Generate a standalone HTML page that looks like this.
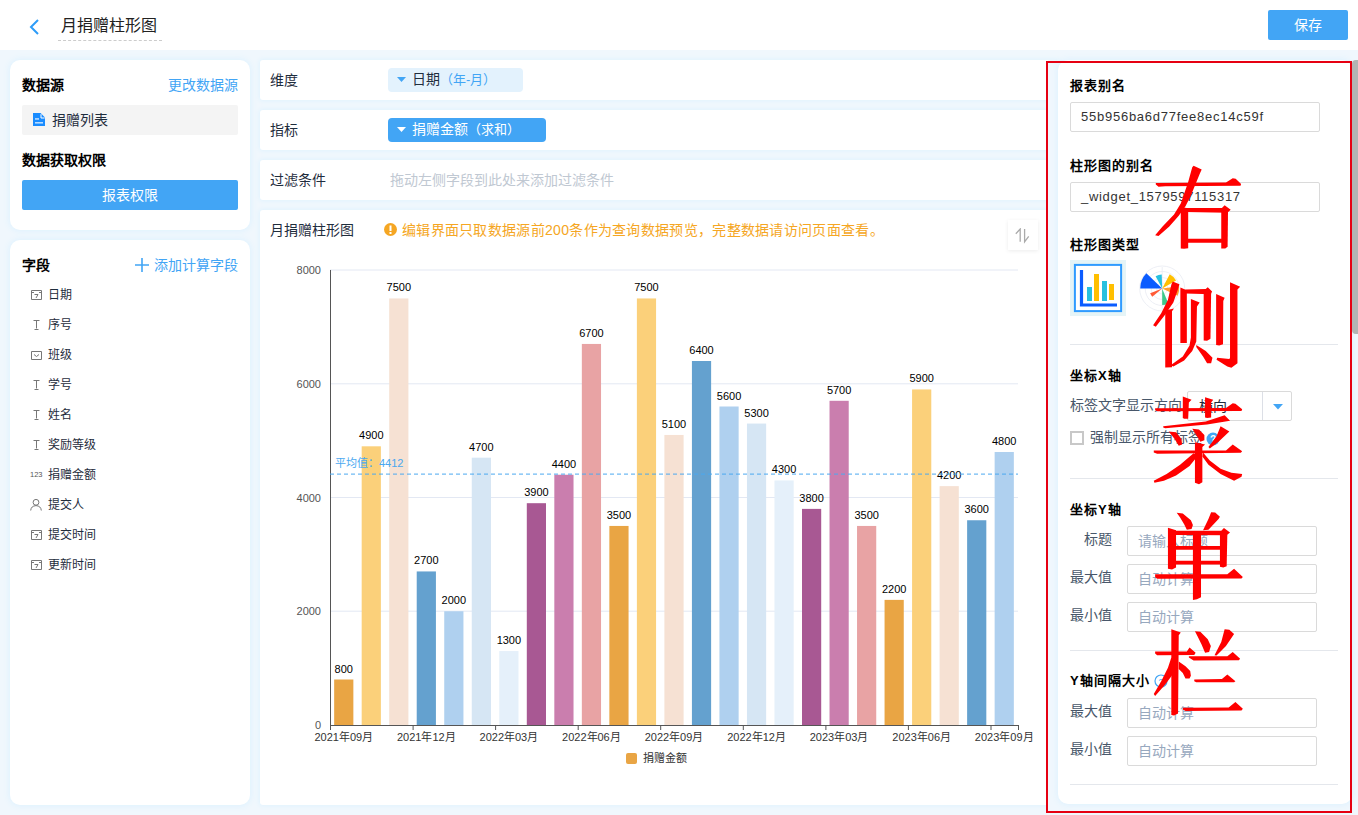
<!DOCTYPE html>
<html lang="zh-CN">
<head>
<meta charset="utf-8">
<style>
*{box-sizing:border-box;margin:0;padding:0}
html,body{width:1358px;height:815px;overflow:hidden}
body{position:relative;background:#f0f7fd;font-family:"Liberation Sans",sans-serif;color:#1f2d3d}
.a{position:absolute;white-space:nowrap}
.hdr{left:0;top:0;width:1358px;height:50px;background:#fff}
.card{position:absolute;background:#fff;border-radius:10px;box-shadow:0 0 6px 1px rgba(222,242,254,1)}
.mcard{position:absolute;background:#fff;border-radius:3px;box-shadow:0 0 4px 1px rgba(224,243,254,1)}
.b{font-weight:bold;color:#000}
.inp{position:absolute;border:1px solid #dadada;border-radius:2px;background:#fff}
.lab{color:#48576a;font-size:14px}
.ph{color:#97a8be;font-size:14px}
.div{position:absolute;height:1px;background:#e4e7ec}
.fi{position:absolute;left:31px;width:11px;height:10px}
.ft{position:absolute;left:48px;font-size:12px;color:#1f2d3d;line-height:14px}
</style>
</head>
<body>
<!-- header -->
<div class="a hdr"></div>
<svg class="a" style="left:28px;top:18px" width="14" height="18" viewBox="0 0 14 18"><path d="M10 2 L3 9 L10 16" fill="none" stroke="#2d9cf8" stroke-width="2"/></svg>
<div class="a" style="left:61px;top:15px;font-size:16px;line-height:22px;color:#222">月捐赠柱形图</div>
<div class="a" style="left:58px;top:40px;width:104px;height:0;border-top:1px dashed #ccc"></div>
<div class="a" style="left:1268px;top:10px;width:80px;height:30px;background:#42a5f5;border-radius:2px;color:#fff;font-size:14px;line-height:30px;text-align:center">保存</div>

<!-- left card 1 -->
<div class="card" style="left:10px;top:60px;width:240px;height:170px"></div>
<div class="a b" style="left:22px;top:76px;font-size:14px;line-height:18px">数据源</div>
<div class="a" style="left:168px;top:76px;font-size:14px;line-height:18px;color:#42a5f5">更改数据源</div>
<div class="a" style="left:22px;top:105px;width:216px;height:30px;background:#f4f4f4;border-radius:2px"></div>
<svg class="a" style="left:33px;top:113px" width="12" height="13" viewBox="0 0 12 13"><path d="M0 0 H7.6 L12 4.4 V13 H0 Z" fill="#1a8cff"/><path d="M8 1.2 V5 H11.6" fill="none" stroke="#fff" stroke-width="1"/><rect x="2" y="5.4" width="4" height="1.1" fill="#fff"/><rect x="2" y="9.3" width="8" height="1.1" fill="#fff"/></svg>
<div class="a" style="left:52px;top:111px;font-size:14px;line-height:18px;color:#1f2d3d">捐赠列表</div>
<div class="a b" style="left:22px;top:151px;font-size:14px;line-height:18px">数据获取权限</div>
<div class="a" style="left:22px;top:180px;width:216px;height:30px;background:#42a5f5;border-radius:2px;color:#fff;font-size:14px;line-height:30px;text-align:center">报表权限</div>

<!-- left card 2 -->
<div class="card" style="left:10px;top:240px;width:240px;height:565px"></div>
<div class="a b" style="left:22px;top:256px;font-size:14px;line-height:18px">字段</div>
<svg class="a" style="left:135px;top:258px" width="14" height="14" viewBox="0 0 14 14"><path d="M7 0 V14 M0 7 H14" stroke="#42a5f5" stroke-width="1.6"/></svg>
<div class="a" style="left:154px;top:256px;font-size:14px;line-height:18px;color:#42a5f5">添加计算字段</div>

<svg class="fi" style="top:290px" width="11" height="10" viewBox="0 0 11 10"><path d="M0.5 0.5 H10.5 V9.5 H0.5 Z M0.5 2.5 H3 M8 2.5 H10.5 M3.5 4.5 H7 L5 8" fill="none" stroke="#777" stroke-width="1"/></svg>
<div class="ft" style="top:288px">日期</div>
<svg class="fi" style="top:320px" width="11" height="10" viewBox="0 0 11 10"><path d="M2.5 0.5 H8.5 M5.5 0.5 V8.5 M3.5 9.5 H7.5" fill="none" stroke="#777" stroke-width="1"/></svg>
<div class="ft" style="top:318px">序号</div>
<svg class="fi" style="top:350px" width="11" height="10" viewBox="0 0 11 10"><path d="M0.5 1.5 H10.5 V9.5 H0.5 Z M3 4.5 L5.5 6.5 L8 4.5" fill="none" stroke="#777" stroke-width="1"/></svg>
<div class="ft" style="top:348px">班级</div>
<svg class="fi" style="top:380px" width="11" height="10" viewBox="0 0 11 10"><path d="M2.5 0.5 H8.5 M5.5 0.5 V8.5 M3.5 9.5 H7.5" fill="none" stroke="#777" stroke-width="1"/></svg>
<div class="ft" style="top:378px">学号</div>
<svg class="fi" style="top:410px" width="11" height="10" viewBox="0 0 11 10"><path d="M2.5 0.5 H8.5 M5.5 0.5 V8.5 M3.5 9.5 H7.5" fill="none" stroke="#777" stroke-width="1"/></svg>
<div class="ft" style="top:408px">姓名</div>
<svg class="fi" style="top:440px" width="11" height="10" viewBox="0 0 11 10"><path d="M2.5 0.5 H8.5 M5.5 0.5 V8.5 M3.5 9.5 H7.5" fill="none" stroke="#777" stroke-width="1"/></svg>
<div class="ft" style="top:438px">奖励等级</div>
<div class="a" style="left:30px;top:470px;font-size:7.5px;line-height:10px;color:#555">123</div>
<div class="ft" style="top:468px">捐赠金额</div>
<svg class="a" style="left:30px;top:499px" width="12" height="12" viewBox="0 0 12 12"><circle cx="6" cy="3.3" r="2.9" fill="none" stroke="#777" stroke-width="1"/><path d="M0.7 11.5 Q1 7 6 6.6 Q11 7 11.3 11.5" fill="none" stroke="#777" stroke-width="1"/></svg>
<div class="ft" style="top:498px">提交人</div>
<svg class="fi" style="top:530px" width="11" height="10" viewBox="0 0 11 10"><path d="M0.5 0.5 H10.5 V9.5 H0.5 Z M0.5 2.5 H3 M8 2.5 H10.5 M3.5 4.5 H7 L5 8" fill="none" stroke="#777" stroke-width="1"/></svg>
<div class="ft" style="top:528px">提交时间</div>
<svg class="fi" style="top:560px" width="11" height="10" viewBox="0 0 11 10"><path d="M0.5 0.5 H10.5 V9.5 H0.5 Z M0.5 2.5 H3 M8 2.5 H10.5 M3.5 4.5 H7 L5 8" fill="none" stroke="#777" stroke-width="1"/></svg>
<div class="ft" style="top:558px">更新时间</div>

<!-- middle rows -->
<div class="mcard" style="left:260px;top:60px;width:800px;height:40px"></div>
<div class="a" style="left:270px;top:71px;font-size:14px;line-height:18px;color:#1f2d3d">维度</div>
<div class="a" style="left:388px;top:68px;width:135px;height:24px;background:#e3f2fd;border-radius:4px"></div>
<svg class="a" style="left:397px;top:77px" width="9" height="6" viewBox="0 0 9 6"><path d="M0 0 H9 L4.5 5 Z" fill="#42a5f5"/></svg>
<div class="a" style="left:412px;top:70px;font-size:14px;line-height:18px;color:#1f2d3d">日期<span style="color:#42a5f5;font-size:13px">（年-月）</span></div>

<div class="mcard" style="left:260px;top:110px;width:800px;height:40px"></div>
<div class="a" style="left:270px;top:121px;font-size:14px;line-height:18px;color:#1f2d3d">指标</div>
<div class="a" style="left:388px;top:118px;width:158px;height:24px;background:#42a5f5;border-radius:4px"></div>
<svg class="a" style="left:397px;top:127px" width="9" height="6" viewBox="0 0 9 6"><path d="M0 0 H9 L4.5 5 Z" fill="#fff"/></svg>
<div class="a" style="left:412px;top:120px;font-size:14px;line-height:18px;color:#fff">捐赠金额<span style="font-size:13px">（求和）</span></div>

<div class="mcard" style="left:260px;top:160px;width:800px;height:40px"></div>
<div class="a" style="left:270px;top:171px;font-size:14px;line-height:18px;color:#1f2d3d">过滤条件</div>
<div class="a" style="left:390px;top:171px;font-size:14px;line-height:18px;color:#c0c8d2">拖动左侧字段到此处来添加过滤条件</div>

<!-- chart card -->
<div class="mcard" style="left:260px;top:210px;width:800px;height:595px"></div>
<div class="a" style="left:270px;top:221px;font-size:14px;line-height:18px;color:#1f2d3d">月捐赠柱形图</div>
<svg class="a" style="left:384px;top:223px" width="13" height="13" viewBox="0 0 13 13"><circle cx="6.5" cy="6.5" r="6.5" fill="#f5a623"/><rect x="5.5" y="2.5" width="2" height="5.5" fill="#fff"/><rect x="5.5" y="9" width="2" height="2" fill="#fff"/></svg>
<div class="a" style="left:402px;top:221px;font-size:14px;line-height:18px;letter-spacing:0.3px;color:#f5a623">编辑界面只取数据源前200条作为查询数据预览，完整数据请访问页面查看。</div>
<div class="a" style="left:1008px;top:220px;width:30px;height:30px;background:#fff;box-shadow:0 1px 4px rgba(0,0,0,.08)"></div>
<svg class="a" style="left:1015px;top:228px" width="16" height="16" viewBox="0 0 16 16"><path d="M0.8 5.7 L5.2 1 V13.8 M9.6 1 V13.8 L13.7 8.3" fill="none" stroke="#aaa" stroke-width="1.3"/></svg>

<svg id="chart" class="a" style="left:0;top:0;font-family:'Liberation Sans',sans-serif" width="1358" height="815"><line x1="330.0" y1="611.2" x2="1018.0" y2="611.2" stroke="#e3e8f3" stroke-width="1"/><line x1="330.0" y1="497.5" x2="1018.0" y2="497.5" stroke="#e3e8f3" stroke-width="1"/><line x1="330.0" y1="383.8" x2="1018.0" y2="383.8" stroke="#e3e8f3" stroke-width="1"/><line x1="330.0" y1="270.0" x2="1018.0" y2="270.0" stroke="#e3e8f3" stroke-width="1"/><text x="321" y="729.0" text-anchor="end" font-size="11" fill="#555">0</text><text x="321" y="615.2" text-anchor="end" font-size="11" fill="#555">2000</text><text x="321" y="501.5" text-anchor="end" font-size="11" fill="#555">4000</text><text x="321" y="387.8" text-anchor="end" font-size="11" fill="#555">6000</text><text x="321" y="274.0" text-anchor="end" font-size="11" fill="#555">8000</text><rect x="334.16" y="679.50" width="19.2" height="45.50" fill="#e9a544"/><text x="343.76" y="672.50" text-anchor="middle" font-size="11" fill="#000">800</text><rect x="361.68" y="446.31" width="19.2" height="278.69" fill="#fbd07a"/><text x="371.28" y="439.31" text-anchor="middle" font-size="11" fill="#000">4900</text><rect x="389.20" y="298.44" width="19.2" height="426.56" fill="#f6e1d3"/><text x="398.80" y="291.44" text-anchor="middle" font-size="11" fill="#000">7500</text><rect x="416.72" y="571.44" width="19.2" height="153.56" fill="#64a1cf"/><text x="426.32" y="564.44" text-anchor="middle" font-size="11" fill="#000">2700</text><rect x="444.24" y="611.25" width="19.2" height="113.75" fill="#afd0ef"/><text x="453.84" y="604.25" text-anchor="middle" font-size="11" fill="#000">2000</text><rect x="471.76" y="457.69" width="19.2" height="267.31" fill="#d6e6f4"/><text x="481.36" y="450.69" text-anchor="middle" font-size="11" fill="#000">4700</text><rect x="499.28" y="651.06" width="19.2" height="73.94" fill="#e5f0fa"/><text x="508.88" y="644.06" text-anchor="middle" font-size="11" fill="#000">1300</text><rect x="526.80" y="503.19" width="19.2" height="221.81" fill="#a85893"/><text x="536.40" y="496.19" text-anchor="middle" font-size="11" fill="#000">3900</text><rect x="554.32" y="474.75" width="19.2" height="250.25" fill="#ca7eae"/><text x="563.92" y="467.75" text-anchor="middle" font-size="11" fill="#000">4400</text><rect x="581.84" y="343.94" width="19.2" height="381.06" fill="#e8a3a4"/><text x="591.44" y="336.94" text-anchor="middle" font-size="11" fill="#000">6700</text><rect x="609.36" y="525.94" width="19.2" height="199.06" fill="#e9a544"/><text x="618.96" y="518.94" text-anchor="middle" font-size="11" fill="#000">3500</text><rect x="636.88" y="298.44" width="19.2" height="426.56" fill="#fbd07a"/><text x="646.48" y="291.44" text-anchor="middle" font-size="11" fill="#000">7500</text><rect x="664.40" y="434.94" width="19.2" height="290.06" fill="#f6e1d3"/><text x="674.00" y="427.94" text-anchor="middle" font-size="11" fill="#000">5100</text><rect x="691.92" y="361.00" width="19.2" height="364.00" fill="#64a1cf"/><text x="701.52" y="354.00" text-anchor="middle" font-size="11" fill="#000">6400</text><rect x="719.44" y="406.50" width="19.2" height="318.50" fill="#afd0ef"/><text x="729.04" y="399.50" text-anchor="middle" font-size="11" fill="#000">5600</text><rect x="746.96" y="423.56" width="19.2" height="301.44" fill="#d6e6f4"/><text x="756.56" y="416.56" text-anchor="middle" font-size="11" fill="#000">5300</text><rect x="774.48" y="480.44" width="19.2" height="244.56" fill="#e5f0fa"/><text x="784.08" y="473.44" text-anchor="middle" font-size="11" fill="#000">4300</text><rect x="802.00" y="508.88" width="19.2" height="216.12" fill="#a85893"/><text x="811.60" y="501.88" text-anchor="middle" font-size="11" fill="#000">3800</text><rect x="829.52" y="400.81" width="19.2" height="324.19" fill="#ca7eae"/><text x="839.12" y="393.81" text-anchor="middle" font-size="11" fill="#000">5700</text><rect x="857.04" y="525.94" width="19.2" height="199.06" fill="#e8a3a4"/><text x="866.64" y="518.94" text-anchor="middle" font-size="11" fill="#000">3500</text><rect x="884.56" y="599.88" width="19.2" height="125.12" fill="#e9a544"/><text x="894.16" y="592.88" text-anchor="middle" font-size="11" fill="#000">2200</text><rect x="912.08" y="389.44" width="19.2" height="335.56" fill="#fbd07a"/><text x="921.68" y="382.44" text-anchor="middle" font-size="11" fill="#000">5900</text><rect x="939.60" y="486.12" width="19.2" height="238.88" fill="#f6e1d3"/><text x="949.20" y="479.12" text-anchor="middle" font-size="11" fill="#000">4200</text><rect x="967.12" y="520.25" width="19.2" height="204.75" fill="#64a1cf"/><text x="976.72" y="513.25" text-anchor="middle" font-size="11" fill="#000">3600</text><rect x="994.64" y="452.00" width="19.2" height="273.00" fill="#afd0ef"/><text x="1004.24" y="445.00" text-anchor="middle" font-size="11" fill="#000">4800</text><line x1="330.5" y1="270.0" x2="330.5" y2="725.0" stroke="#555" stroke-width="1"/><line x1="330.0" y1="725.5" x2="1018.5" y2="725.5" stroke="#555" stroke-width="1"/><line x1="330.5" y1="725.0" x2="330.5" y2="730.0" stroke="#555" stroke-width="1"/><text x="343.8" y="741.0" text-anchor="middle" font-size="11" fill="#333">2021年09月</text><line x1="413.1" y1="725.0" x2="413.1" y2="730.0" stroke="#555" stroke-width="1"/><text x="426.3" y="741.0" text-anchor="middle" font-size="11" fill="#333">2021年12月</text><line x1="495.6" y1="725.0" x2="495.6" y2="730.0" stroke="#555" stroke-width="1"/><text x="508.9" y="741.0" text-anchor="middle" font-size="11" fill="#333">2022年03月</text><line x1="578.2" y1="725.0" x2="578.2" y2="730.0" stroke="#555" stroke-width="1"/><text x="591.4" y="741.0" text-anchor="middle" font-size="11" fill="#333">2022年06月</text><line x1="660.7" y1="725.0" x2="660.7" y2="730.0" stroke="#555" stroke-width="1"/><text x="674.0" y="741.0" text-anchor="middle" font-size="11" fill="#333">2022年09月</text><line x1="743.3" y1="725.0" x2="743.3" y2="730.0" stroke="#555" stroke-width="1"/><text x="756.6" y="741.0" text-anchor="middle" font-size="11" fill="#333">2022年12月</text><line x1="825.9" y1="725.0" x2="825.9" y2="730.0" stroke="#555" stroke-width="1"/><text x="839.1" y="741.0" text-anchor="middle" font-size="11" fill="#333">2023年03月</text><line x1="908.4" y1="725.0" x2="908.4" y2="730.0" stroke="#555" stroke-width="1"/><text x="921.7" y="741.0" text-anchor="middle" font-size="11" fill="#333">2023年06月</text><line x1="991.0" y1="725.0" x2="991.0" y2="730.0" stroke="#555" stroke-width="1"/><text x="1004.2" y="741.0" text-anchor="middle" font-size="11" fill="#333">2023年09月</text><line x1="1018.5" y1="725.0" x2="1018.5" y2="730.0" stroke="#555" stroke-width="1"/><line x1="330.0" y1="474.1" x2="1018.0" y2="474.1" stroke="#4aa8f0" stroke-width="1" stroke-dasharray="4 3"/><text x="335" y="467.1" font-size="11" fill="#4aa8f0">平均值：4412</text><rect x="626" y="753" width="11" height="11" rx="2" fill="#e9a544"/><text x="643" y="762" font-size="11" fill="#333">捐赠金额</text></svg>

<!-- right panel -->
<div class="a" style="left:1048px;top:60px;width:304px;height:752px;background:#f0f7fd"></div>
<div class="card" style="left:1058px;top:60px;width:294px;height:744px;border-radius:10px"></div>
<div class="a b" style="left:1070px;top:78px;font-size:13px;letter-spacing:1px;line-height:16px">报表别名</div>
<div class="inp" style="left:1070px;top:102px;width:250px;height:30px"></div>
<div class="a" style="left:1081px;top:102px;line-height:30px;font-size:13px;letter-spacing:0.75px;color:#333">55b956ba6d77fee8ec14c59f</div>
<div class="a b" style="left:1070px;top:158px;font-size:13px;letter-spacing:1px;line-height:16px">柱形图的别名</div>
<div class="inp" style="left:1070px;top:182px;width:250px;height:30px"></div>
<div class="a" style="left:1081px;top:182px;line-height:30px;font-size:13px;letter-spacing:0.7px;color:#333">_widget_1579597115317</div>
<div class="a b" style="left:1070px;top:237px;font-size:13px;letter-spacing:1px;line-height:16px">柱形图类型</div>
<div class="a" style="left:1070px;top:260px;width:56px;height:56px;background:#e5f4f7"></div>
<svg class="a" style="left:1070px;top:260px" width="56" height="56" viewBox="0 0 56 56">
<rect x="4.9" y="4.9" width="46.2" height="46.2" fill="#fff" stroke="#2f9bff" stroke-width="2"/>
<path d="M11.5 10 V45 H47" fill="none" stroke="#0b5cff" stroke-width="3.2"/>
<rect x="17" y="27" width="5" height="14" fill="#27c0df"/>
<rect x="24" y="14" width="5" height="27" fill="#ffbf00"/>
<rect x="32" y="21" width="5" height="20" fill="#27c0df"/>
<rect x="39" y="24" width="5" height="16" fill="#ffbf00"/>
</svg>
<svg class="a" style="left:1136px;top:262px" width="52" height="52" viewBox="0 0 52 52"><circle cx="26.2" cy="26.5" r="22.5" fill="none" stroke="#e8ebf3" stroke-width="0.8"/><circle cx="26.2" cy="26.5" r="17" fill="none" stroke="#e8ebf3" stroke-width="0.8"/><circle cx="26.2" cy="26.5" r="11" fill="none" stroke="#e8ebf3" stroke-width="0.8"/><circle cx="26.2" cy="26.5" r="5.5" fill="none" stroke="#e8ebf3" stroke-width="0.8"/><line x1="26.2" y1="5.0" x2="26.2" y2="48.0" stroke="#e8ebf3" stroke-width="0.8"/><path d="M26.2 26.5 L10.37 11.22 A22 22 0 0 0 4.20 26.50 Z" fill="#0b5cff"/><path d="M26.2 26.5 L25.71 12.51 A14 14 0 0 0 19.63 14.14 Z" fill="#27c0df"/><path d="M26.2 26.5 L40.06 18.50 A16 16 0 0 0 33.71 12.37 Z" fill="#ffbf00"/><path d="M26.2 26.5 L41.61 33.68 A17 17 0 0 0 43.03 24.13 Z" fill="#ff9d2e"/><path d="M26.2 26.5 L26.20 43.00 A16.5 16.5 0 0 0 32.38 41.80 Z" fill="#3dc88a"/><path d="M26.2 26.5 L14.15 31.37 A13 13 0 0 0 16.24 34.86 Z" fill="#ff5a36"/></svg>
<div class="div" style="left:1070px;top:344px;width:268px"></div>
<div class="a b" style="left:1070px;top:368px;font-size:13px;letter-spacing:1px;line-height:16px">坐标X轴</div>
<div class="a lab" style="left:1070px;top:396px;line-height:18px">标签文字显示方向</div>
<div class="inp" style="left:1187px;top:391px;width:105px;height:30px"></div>
<div class="a" style="left:1262px;top:392px;width:1px;height:28px;background:#dcdfe6"></div>
<svg class="a" style="left:1273px;top:404px" width="10" height="6" viewBox="0 0 10 6"><path d="M0 0 H10 L5 5.5 Z" fill="#42a5f5"/></svg>
<div class="a" style="left:1199px;top:397px;font-size:14px;line-height:18px;color:#1f2d3d">横向</div>
<div class="a" style="left:1070px;top:431px;width:14px;height:14px;border:2px solid #c8c8c8;background:#fff"></div>
<div class="a lab" style="left:1090px;top:428px;line-height:18px">强制显示所有标签</div>
<svg class="a" style="left:1206px;top:432px" width="14" height="14" viewBox="0 0 14 14"><circle cx="7" cy="7" r="6.5" fill="#42a5f5"/><text x="7" y="11" text-anchor="middle" font-size="10" font-weight="bold" fill="#fff" font-family="Liberation Sans">?</text></svg>
<div class="div" style="left:1070px;top:478px;width:268px"></div>
<div class="a b" style="left:1070px;top:502px;font-size:13px;letter-spacing:1px;line-height:16px">坐标Y轴</div>
<div class="a lab" style="left:1084px;top:530px;line-height:18px">标题</div>
<div class="inp" style="left:1127px;top:526px;width:190px;height:30px"></div>
<div class="a ph" style="left:1138px;top:526px;line-height:30px">请输入标题</div>
<div class="a lab" style="left:1070px;top:568px;line-height:18px">最大值</div>
<div class="inp" style="left:1127px;top:564px;width:190px;height:30px"></div>
<div class="a ph" style="left:1138px;top:564px;line-height:30px">自动计算</div>
<div class="a lab" style="left:1070px;top:606px;line-height:18px">最小值</div>
<div class="inp" style="left:1127px;top:602px;width:190px;height:30px"></div>
<div class="a ph" style="left:1138px;top:602px;line-height:30px">自动计算</div>
<div class="div" style="left:1070px;top:650px;width:268px"></div>
<div class="a b" style="left:1070px;top:673px;font-size:13px;letter-spacing:1px;line-height:16px">Y轴间隔大小</div>
<svg class="a" style="left:1154px;top:674px" width="14" height="14" viewBox="0 0 14 14"><circle cx="7" cy="7" r="6" fill="none" stroke="#42a5f5" stroke-width="1.2"/><text x="7" y="10.5" text-anchor="middle" font-size="9" fill="#42a5f5" font-family="Liberation Sans">?</text></svg>
<div class="a lab" style="left:1070px;top:702px;line-height:18px">最大值</div>
<div class="inp" style="left:1127px;top:698px;width:190px;height:30px"></div>
<div class="a ph" style="left:1138px;top:698px;line-height:30px">自动计算</div>
<div class="a lab" style="left:1070px;top:740px;line-height:18px">最小值</div>
<div class="inp" style="left:1127px;top:736px;width:190px;height:30px"></div>
<div class="a ph" style="left:1138px;top:736px;line-height:30px">自动计算</div>
<div class="div" style="left:1070px;top:784px;width:268px"></div>

<!-- scrollbar -->
<div class="a" style="left:1352px;top:60px;width:6px;height:274px;background:#b3b3b3;border-radius:4px 0 0 4px"></div>
<!-- red annotation -->
<div class="a" style="left:1046px;top:61px;width:306px;height:752px;border:2px solid #e60012"></div>
<svg class="a" style="left:0;top:0" width="1358" height="815">
<g transform="translate(1145,155) scale(0.134969)" fill="#ff0000">
<polygon points="80,208 600,204 650,172 672,176 712,214 708,228 150,232 100,236 80,218"/>
<polygon points="360,80 420,108 405,140 340,300 300,380 250,450 180,530 100,600 75,595 130,530 215,440 265,360 320,200 350,90"/>
<polygon points="265,385 320,395 320,690 290,695 265,692"/>
<polygon points="300,392 570,392 590,372 635,405 610,428 300,422"/>
<polygon points="565,400 615,420 612,680 595,692 565,692"/>
<polygon points="315,620 570,620 570,650 315,650"/>
</g>
<g transform="translate(1145,270) scale(0.134969)" fill="#ff0000">
<polygon points="205,85 255,105 245,140 210,240 150,330 80,420 60,410 120,320 170,220 195,110"/>
<polygon points="150,300 215,285 200,305 200,720 150,722"/>
<polygon points="262,130 310,150 310,540 262,540"/>
<polygon points="300,145 450,140 465,128 497,160 487,180 300,175"/>
<polygon points="435,150 490,165 485,510 460,525 435,522"/>
<polygon points="340,215 405,240 385,270 380,530 350,600 290,670 210,715 190,705 280,640 330,560 340,500"/>
<polygon points="380,555 450,600 500,650 490,690 460,690 430,640 380,570"/>
<polygon points="527,178 590,205 580,230 578,550 550,560 527,555"/>
<polygon points="630,90 705,125 685,145 685,690 640,725 610,715 530,665 535,650 625,660 630,650"/>
</g>
<g transform="translate(1145,385) scale(0.134969)" fill="#ff0000">
<polygon points="75,172 600,170 650,135 670,138 720,180 715,192 90,195 75,185"/>
<polygon points="280,85 345,110 325,130 320,250 290,250 280,245"/>
<polygon points="445,90 505,110 490,130 490,240 460,245 445,240"/>
<polygon points="135,305 450,270 590,225 630,265 460,292 150,320 135,315"/>
<polygon points="175,345 230,350 270,400 275,440 250,450 220,400"/>
<polygon points="350,325 400,330 440,370 440,410 410,420 380,370"/>
<polygon points="560,305 625,345 545,420 480,470 470,460 530,380"/>
<polygon points="65,485 600,485 650,440 720,490 710,502 90,510 65,500"/>
<polygon points="370,425 445,440 425,460 425,720 400,735 370,725"/>
<polygon points="360,505 395,520 330,600 230,670 140,710 70,725 65,710 160,660 260,590"/>
<polygon points="430,500 480,560 560,620 640,650 720,660 715,680 660,710 560,660 470,590 425,530"/>
</g>
<g transform="translate(1145,500) scale(0.134969)" fill="#ff0000">
<polygon points="235,95 280,100 340,150 355,185 345,215 310,220 290,180 260,130"/>
<polygon points="490,90 520,92 555,125 545,140 470,220 430,225 470,140"/>
<polygon points="170,205 230,225 230,500 200,515 170,510"/>
<polygon points="225,228 565,228 585,208 630,240 605,262 225,260"/>
<polygon points="555,240 610,255 605,490 580,500 555,495"/>
<polygon points="225,340 560,340 560,368 225,368"/>
<polygon points="225,450 560,450 560,478 225,478"/>
<polygon points="75,550 610,550 660,510 725,570 715,582 90,584 75,572"/>
<polygon points="355,230 415,230 415,720 385,735 355,740"/>
</g>
<g transform="translate(1145,615) scale(0.134969)" fill="#ff0000">
<polygon points="75,270 310,270 330,240 375,280 365,296 90,298 75,285"/>
<polygon points="195,105 265,130 250,150 245,730 215,745 195,740"/>
<polygon points="195,315 205,330 205,440 150,515 75,600 65,585 120,490 170,390"/>
<polygon points="250,345 300,380 335,415 340,450 330,470 300,470 280,430 250,400"/>
<polygon points="370,120 410,125 465,180 488,230 475,275 445,280 420,220 390,160"/>
<polygon points="590,105 625,110 660,140 600,230 530,300 515,298 565,200"/>
<polygon points="325,305 610,305 650,275 705,325 695,336 360,338 325,315"/>
<polygon points="365,478 570,475 610,440 670,490 660,498 380,498 365,490"/>
<polygon points="280,688 620,685 670,645 725,695 715,707 300,712 280,700"/>
</g>
</svg>
</body>
</html>
